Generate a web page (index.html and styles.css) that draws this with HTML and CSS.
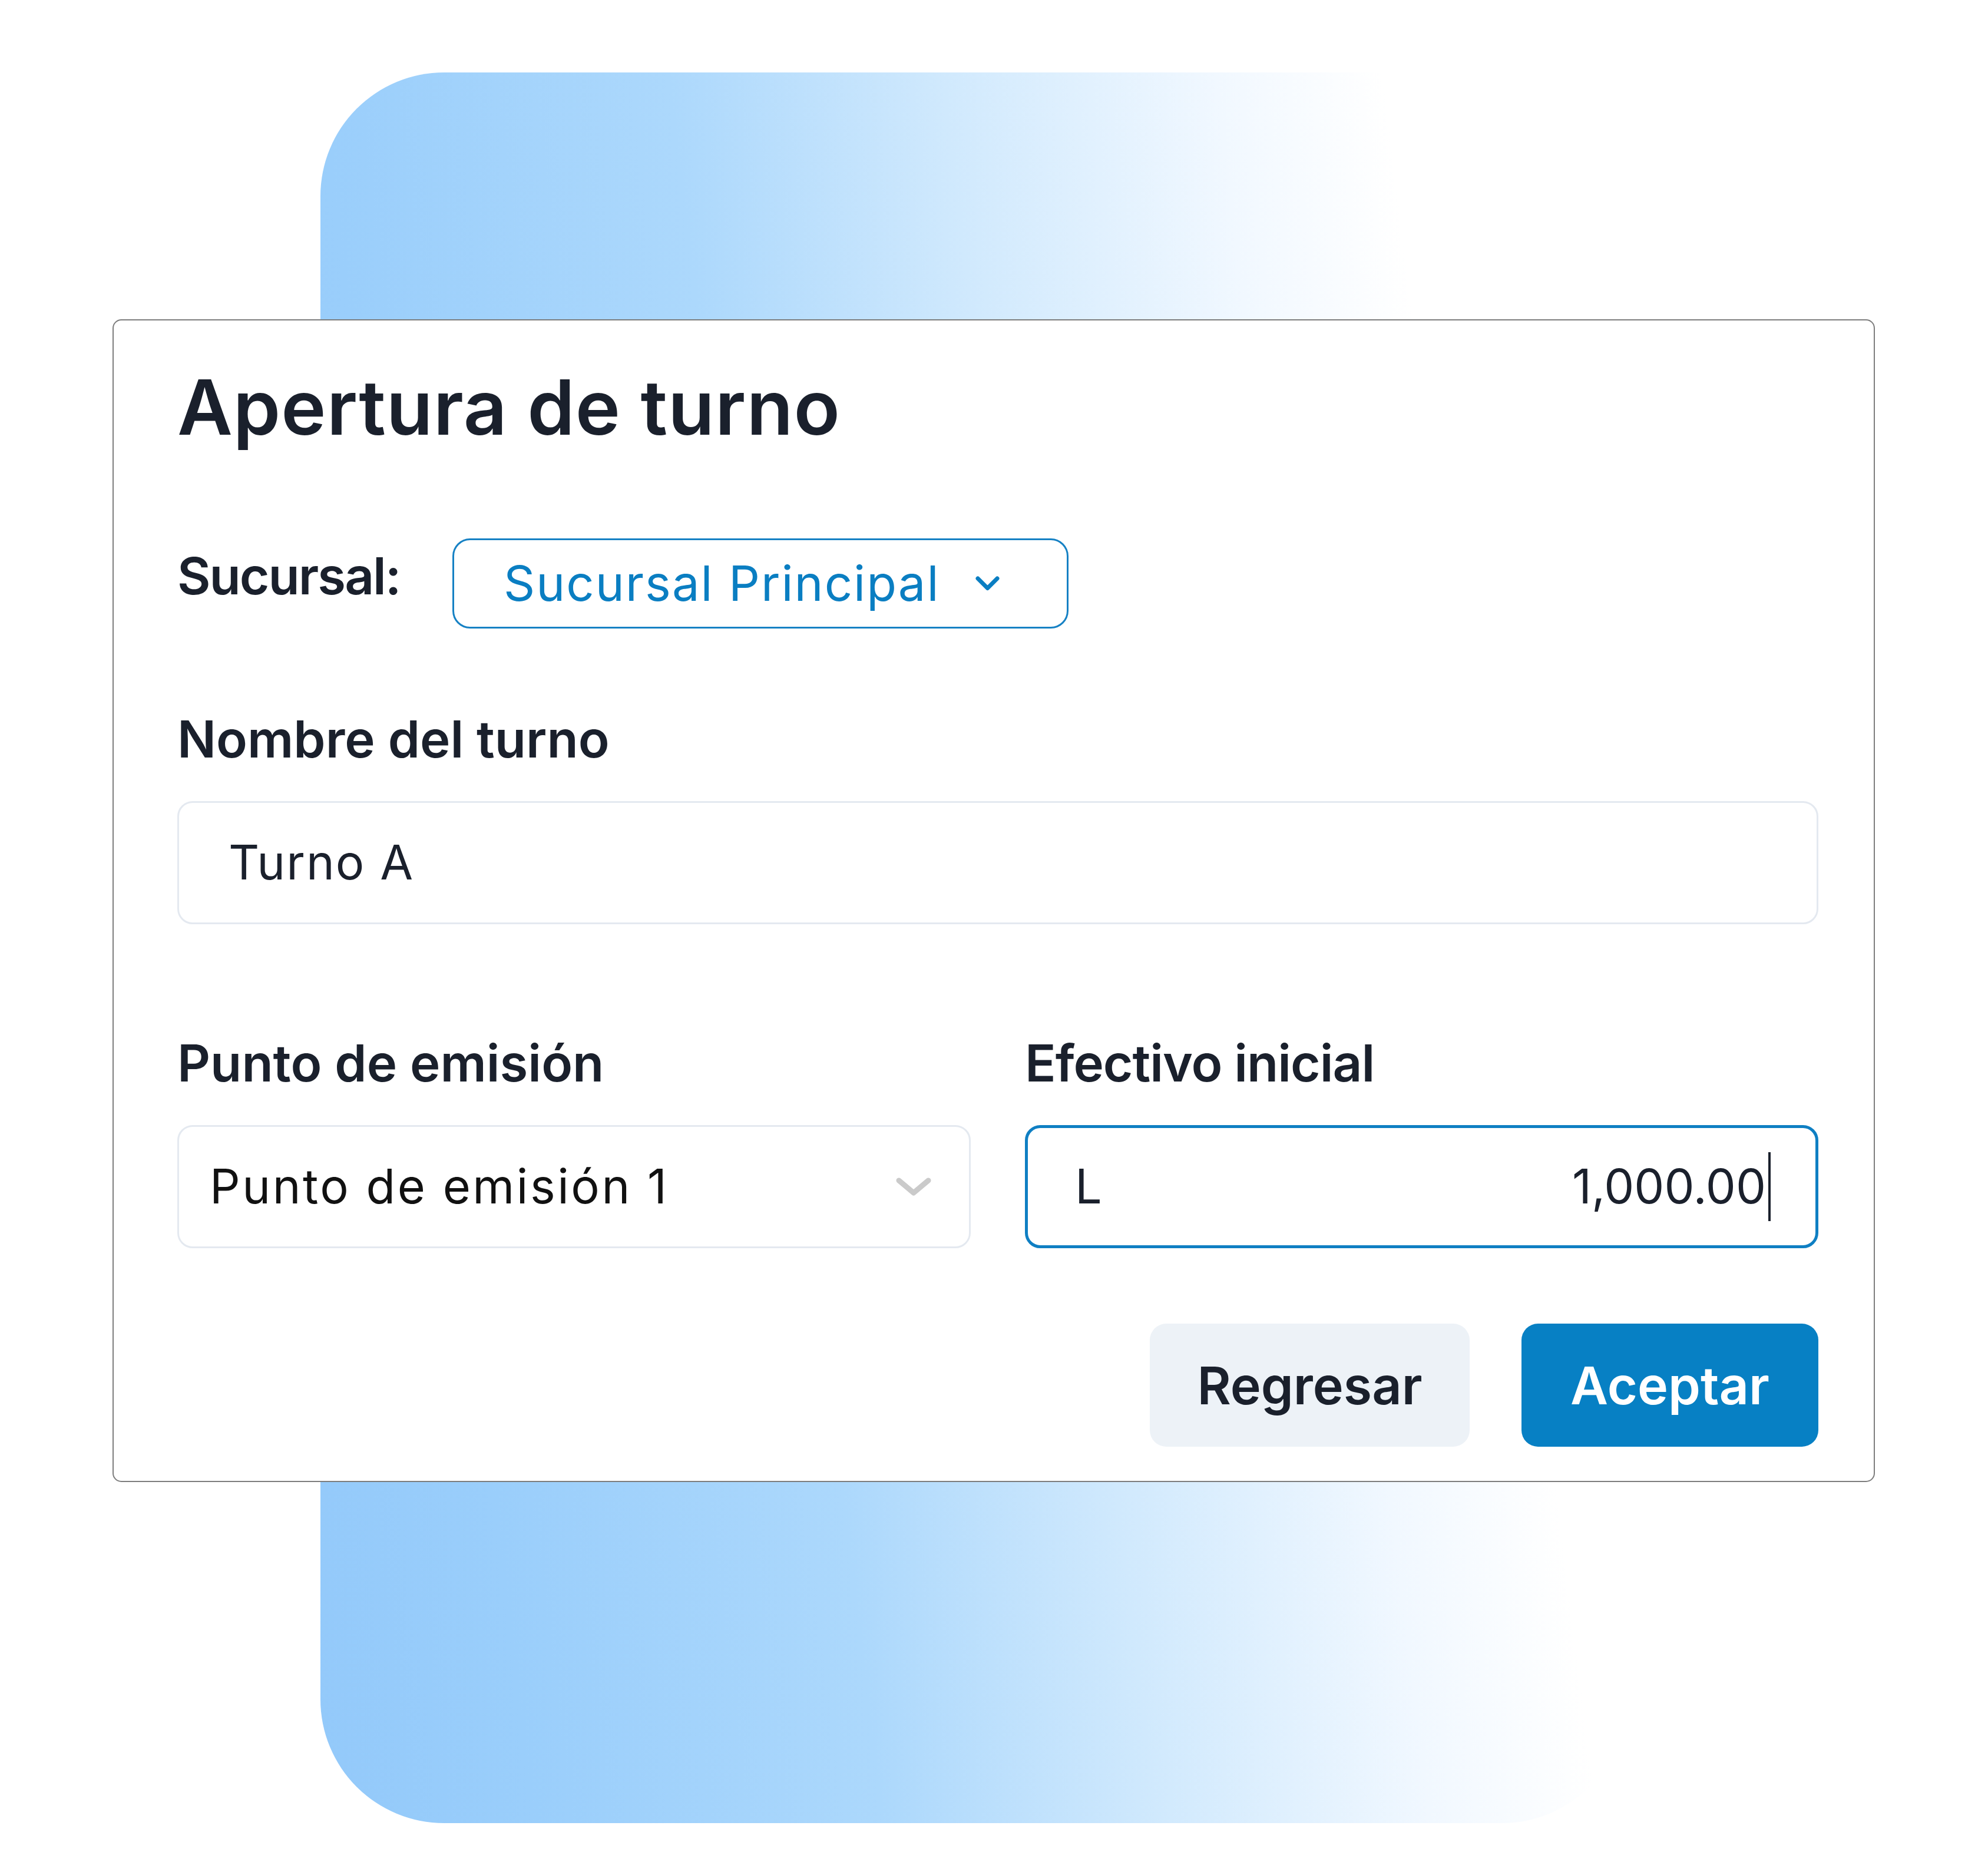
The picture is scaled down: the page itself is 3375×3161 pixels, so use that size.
FILE: index.html
```html
<!DOCTYPE html>
<html lang="es">
<head>
<meta charset="utf-8">
<title>Apertura de turno</title>
<link rel="stylesheet" href="styles.css">
</head>
<body>
<div class="stage">
  <div class="backdrop"></div>
  <section class="card">
    <h1 class="title">Apertura de turno</h1>
    <div class="branch-row">
      <span class="branch-label">Sucursal:</span>
      <button class="branch-select" type="button">
        <span class="branch-value">Sucursal Principal</span>
        <svg class="branch-chevron" width="41" height="25" viewBox="0 0 41 25"><path d="M4 4 L20.5 20.5 L37 4" fill="none" stroke="#0a7ec2" stroke-width="7" stroke-linecap="round" stroke-linejoin="round"/></svg>
      </button>
    </div>
    <div class="field-label">Nombre del turno</div>
    <div class="input input-name">Turno A</div>
    <div class="cols">
      <div class="col">
        <div class="field-label">Punto de emisión</div>
        <div class="input input-select">
          <span class="select-value">Punto de emisión 1</span>
          <svg class="select-chevron" width="60" height="31" viewBox="0 0 60 31"><path d="M5 5 L30 26 L55 5" fill="none" stroke="#cacaca" stroke-width="9" stroke-linecap="round" stroke-linejoin="round"/></svg>
        </div>
      </div>
      <div class="col">
        <div class="field-label field-label-tight">Efectivo inicial</div>
        <div class="input input-money">
          <span class="currency">L</span>
          <span class="amount">1,000.00<span class="caret"></span></span>
        </div>
      </div>
    </div>
    <div class="actions">
      <button class="btn btn-back" type="button">Regresar</button>
      <button class="btn btn-ok" type="button">Aceptar</button>
    </div>
  </section>
</div>
</body>
</html>
```
FILE: styles.css
```css
html, body {
  margin: 0;
  padding: 0;
  background: #ffffff;
}

body {
  font-family: Inter, "Noto Sans", "Liberation Sans", sans-serif;
  color: #1a202c;
}

.stage {
  position: relative;
  width: 3375px;
  height: 3161px;
  padding: 542px 0 0 191px;
  box-sizing: border-box;
  overflow: hidden;
}

.backdrop {
  position: absolute;
  left: 544px;
  top: 123px;
  width: 2216px;
  height: 2972px;
  border-radius: 210px;
  background: linear-gradient(83deg, #93c9fa 0%, #9acefb 14%, #acd8fc 37%, #d0e9fd 55%, #f1f8ff 73%, #ffffff 84%);
}

.card {
  position: relative;
  z-index: 1;
  width: 2992px;
  height: 1974px;
  box-sizing: border-box;
  background: #ffffff;
  border: 2px solid #7d7d7d;
  border-radius: 15px;
  padding: 83px 94px 0 108px;
}

.title {
  margin: 0;
  font-size: 129px;
  line-height: 1;
  font-weight: 600;
  letter-spacing: 1px;
  color: #1a202c;
}

.branch-row {
  display: flex;
  align-items: flex-start;
  margin-top: 158px;
  height: 153px;
}

.branch-label {
  flex: 0 0 467px;
  padding-top: 20px;
  font-size: 87px;
  line-height: 1;
  font-weight: 600;
  letter-spacing: -2px;
}

.branch-select {
  display: flex;
  align-items: center;
  width: 1046px;
  height: 153px;
  box-sizing: border-box;
  border: 3px solid #1681c4;
  border-radius: 30px;
  background: #ffffff;
  padding: 0 0 0 84px;
  font-family: inherit;
  cursor: pointer;
}

.branch-value {
  font-size: 83px;
  line-height: 1;
  font-weight: 400;
  letter-spacing: 2px;
  color: #0a7ec2;
}

.branch-chevron {
  margin-left: 60px;
}

.field-label {
  margin-top: 144px;
  font-size: 87px;
  line-height: 1;
  font-weight: 600;
  color: #1a202c;
}

.field-label-tight {
  letter-spacing: -1px;
}

.input {
  margin-top: 62px;
  height: 209px;
  box-sizing: border-box;
  border: 3px solid #e4e9f0;
  border-radius: 26px;
  display: flex;
  align-items: center;
  font-size: 81px;
  line-height: 1;
  font-weight: 400;
  color: #1a202c;
  background: #ffffff;
}

.input-name {
  padding-left: 84px;
  letter-spacing: 2px;
}

.cols {
  display: grid;
  grid-template-columns: 1fr 1fr;
  column-gap: 92px;
  margin-top: 48px;
}

.input-select {
  justify-content: space-between;
  padding: 0 64px 0 52px;
  color: #111111;
}

.select-value {
  letter-spacing: 3.5px;
}

.input-money {
  justify-content: space-between;
  border: 5px solid #0f7fc3;
  padding: 0 76px 0 80px;
  color: #1a202c;
}

.amount {
  display: flex;
  align-items: center;
}

.caret {
  display: inline-block;
  width: 4px;
  height: 117px;
  margin-left: 4px;
  background: #1a202c;
}

.actions {
  display: flex;
  justify-content: flex-end;
  gap: 88px;
  margin-top: 128px;
}

.btn {
  height: 209px;
  border: 0;
  border-radius: 28px;
  font-family: inherit;
  font-size: 88px;
  line-height: 1;
  font-weight: 600;
  display: flex;
  align-items: center;
  justify-content: center;
  cursor: pointer;
}

.btn-back {
  width: 543px;
  background: #edf2f7;
  color: #1a202c;
}

.btn-ok {
  width: 504px;
  background: #0780c4;
  color: #ffffff;
}
```
